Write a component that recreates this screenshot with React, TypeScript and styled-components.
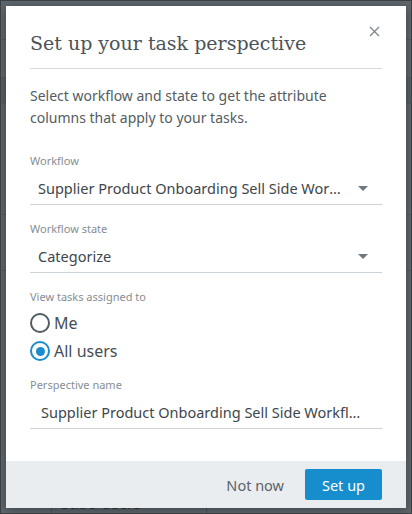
import React, { useState } from 'react';
import styled, { createGlobalStyle } from 'styled-components';

const GlobalStyle = createGlobalStyle`
  html, body {
    margin: 0;
    padding: 0;
  }
  body {
    font-family: 'Noto Sans', 'Open Sans', sans-serif;
    background: #5e676d;
  }
`;

const Backdrop = styled.div`
  position: relative;
  height: 100vh;
  box-sizing: border-box;
  border: 1px solid #3b4044;
  background: #5e676d;
  overflow: hidden;
  display: flex;
  flex-direction: column;
`;

const BgRow = styled.div<{ $h: number; $tone?: string }>`
  height: ${(p) => p.$h}px;
  flex-shrink: 0;
  border-bottom: 1px solid #545c62;
  background: ${(p) => p.$tone || 'transparent'};
`;

const BgSpacer = styled.div`
  flex: 1;
`;

const BgCell = styled.div`
  flex-shrink: 0;
  height: 20px;
  margin-left: 50px;
  width: 145px;
  border-left: 1px solid #4c5358;
  border-right: 1px solid #4c5358;
  padding-left: 9px;
  font-size: 15px;
  line-height: 20px;
  color: #2e3337;
`;

const Modal = styled.div`
  position: absolute;
  top: 5px;
  left: 5px;
  width: 400px;
  height: 502px;
  background: #ffffff;
  box-shadow: 0 2px 10px rgba(0, 0, 0, 0.35);
  display: flex;
  flex-direction: column;
`;

const Body = styled.div`
  flex: 1;
  padding: 0 24px;
  position: relative;
`;

const Header = styled.div`
  padding-top: 22px;
  padding-bottom: 10px;
  border-bottom: 1px solid #d3d9de;
`;

const Title = styled.h2`
  margin: 0;
  font-family: 'DejaVu Serif', 'Liberation Serif', serif;
  font-weight: normal;
  font-size: 19px;
  line-height: 30px;
  color: #4b5358;
`;

const Close = styled.button`
  position: absolute;
  top: 17px;
  right: 24px;
  width: 16px;
  height: 16px;
  padding: 0;
  border: none;
  background: transparent;
  cursor: pointer;
  display: flex;
  align-items: center;
  justify-content: center;
`;

const Intro = styled.p`
  margin: 16px 0 24px;
  font-size: 14px;
  line-height: 22px;
  color: #535c62;
`;

const Field = styled.div<{ $gap?: number }>`
  margin-bottom: ${(p) => p.$gap ?? 16}px;
`;

const Label = styled.div<{ $gap?: number }>`
  font-size: 11px;
  line-height: 16px;
  color: #868e94;
  margin-bottom: ${(p) => p.$gap ?? 3}px;
`;

const SelectBox = styled.div`
  display: flex;
  align-items: center;
  height: 32px;
  padding: 0 14px 0 8px;
  border-bottom: 1px solid #ccd3d9;
  cursor: pointer;
`;

const Value = styled.span<{ $indent?: number }>`
  flex: 1;
  min-width: 0;
  padding-left: ${(p) => p.$indent || 0}px;
  font-size: 14.5px;
  color: #3d464b;
  white-space: nowrap;
  overflow: hidden;
  text-overflow: ellipsis;
`;

const Caret = styled.span`
  width: 0;
  height: 0;
  margin-left: 12px;
  border-left: 5px solid transparent;
  border-right: 5px solid transparent;
  border-top: 5px solid #6f787e;
`;

const RadioRow = styled.label`
  display: flex;
  align-items: center;
  gap: 4px;
  height: 28px;
  font-size: 16px;
  color: #454e53;
  cursor: pointer;
`;

const RadioDot = styled.span<{ $on: boolean }>`
  box-sizing: border-box;
  width: 20px;
  height: 20px;
  border-radius: 50%;
  border: 2.5px solid ${(p) => (p.$on ? '#1a8dcd' : '#505b62')};
  display: flex;
  align-items: center;
  justify-content: center;

  &::after {
    content: '';
    width: 9px;
    height: 9px;
    border-radius: 50%;
    background: ${(p) => (p.$on ? '#1a8dcd' : 'transparent')};
  }
`;

const Footer = styled.div`
  height: 47px;
  background: #e9edf0;
  display: flex;
  align-items: center;
  justify-content: flex-end;
  gap: 13px;
  padding: 0 24px;
`;

const TextButton = styled.button`
  border: none;
  background: transparent;
  padding: 0 8px;
  font-family: inherit;
  font-size: 14.5px;
  color: #5a6369;
  cursor: pointer;
`;

const PrimaryButton = styled.button`
  width: 77px;
  height: 31px;
  border: none;
  border-radius: 2px;
  background: #168dcc;
  color: #ffffff;
  font-family: inherit;
  font-size: 14.5px;
  cursor: pointer;
`;

const App: React.FC = () => {
  const [assigned, setAssigned] = useState<'me' | 'all'>('all');

  return (
    <>
      <GlobalStyle />
      <Backdrop>
        <BgRow $h={38} />
        <BgRow $h={37} />
        <BgRow $h={25} $tone="#566066" />
        <BgRow $h={110} />
        <BgRow $h={55} />
        <BgSpacer />
        <BgCell>Stibo Users</BgCell>
        <Modal>
          <Body>
            <Close aria-label="Close">
              <svg width="11" height="11" viewBox="0 0 11 11">
                <path d="M1 1L10 10M10 1L1 10" stroke="#7d868c" strokeWidth="1.3" />
              </svg>
            </Close>
            <Header>
              <Title>Set up your task perspective</Title>
            </Header>
            <Intro>
              Select workflow and state to get the attribute columns that apply to your tasks.
            </Intro>
            <Field>
              <Label>Workflow</Label>
              <SelectBox>
                <Value>Supplier Product Onboarding Sell Side Workflow</Value>
                <Caret />
              </SelectBox>
            </Field>
            <Field>
              <Label>Workflow state</Label>
              <SelectBox>
                <Value>Categorize</Value>
                <Caret />
              </SelectBox>
            </Field>
            <Field $gap={12}>
              <Label $gap={4}>View tasks assigned to</Label>
              <RadioRow onClick={() => setAssigned('me')}>
                <RadioDot $on={assigned === 'me'} />
                Me
              </RadioRow>
              <RadioRow onClick={() => setAssigned('all')}>
                <RadioDot $on={assigned === 'all'} />
                All users
              </RadioRow>
            </Field>
            <Field>
              <Label>Perspective name</Label>
              <SelectBox>
                <Value $indent={3}>Supplier Product Onboarding Sell Side Workflow</Value>
              </SelectBox>
            </Field>
          </Body>
          <Footer>
            <TextButton>Not now</TextButton>
            <PrimaryButton>Set up</PrimaryButton>
          </Footer>
        </Modal>
      </Backdrop>
    </>
  );
};

export default App;
